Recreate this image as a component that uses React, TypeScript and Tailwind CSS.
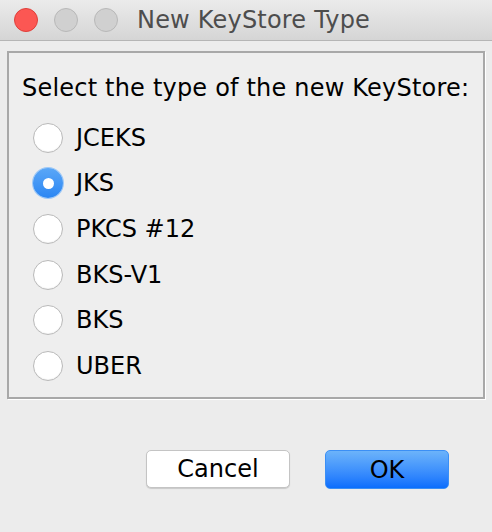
import React from 'react';

const types = ['JCEKS', 'JKS', 'PKCS #12', 'BKS-V1', 'BKS', 'UBER'];

const Radio: React.FC<{ checked?: boolean }> = ({ checked = false }) =>
    checked ? (
        <div className="w-[30px] h-[30px] rounded-full bg-gradient-to-b from-[#5aa7f7] to-[#2a86f3] shadow-[0_0_0_1px_#9cc8f8] flex items-center justify-center">
            <div className="w-[11px] h-[11px] rounded-full bg-white"></div>
        </div>
    ) : (
        <div className="w-[30px] h-[30px] rounded-full bg-white border border-[#b9b9b9] shadow-[inset_0_-1px_1px_rgba(0,0,0,0.05)]"></div>
    );

export default function App() {
    return (
        <div className="w-[492px] h-[532px] bg-[#ececec] flex flex-col font-['DejaVu_Sans',sans-serif] text-black">
            {/* Title bar */}
            <div className="h-[41px] shrink-0 flex items-center bg-gradient-to-b from-[#ebebeb] to-[#d5d5d5] border-b border-[#b5b5b5]">
                <div className="flex items-center gap-4 pl-[14px]">
                    <div className="w-[24px] h-[24px] rounded-full bg-[#fc5753] border border-[#df3f3a]"></div>
                    <div className="w-[24px] h-[24px] rounded-full bg-[#d0d0d0] border border-[#b8b8b8]"></div>
                    <div className="w-[24px] h-[24px] rounded-full bg-[#d0d0d0] border border-[#b8b8b8]"></div>
                </div>
                <div className="ml-[19px] text-[24px] text-[#4d4d4d] leading-none tracking-[0.2px]">New KeyStore Type</div>
            </div>

            {/* Options panel */}
            <div className="mt-[10px] mx-[7px] h-[348px] border-2 border-[#a8a8a8] bg-[#eeeeee] shadow-[1px_1px_0_#ffffff] pl-[13px] pt-[21px]">
                <div className="text-[24px] leading-[28px] tracking-[0.2px]">Select the type of the new KeyStore:</div>
                <div className="flex flex-col mt-[13px] pl-[11px]">
                    {types.map((t, i) => (
                        <div key={t} className="h-[45.6px] flex items-center gap-[13px]">
                            <Radio checked={i === 1} />
                            <span className="text-[24px]">{t}</span>
                        </div>
                    ))}
                </div>
            </div>

            {/* Buttons */}
            <div className="flex pl-[146px] pt-[51px] gap-[35px]">
                <button className="w-[144px] h-[38px] rounded-[5px] bg-white border border-[#c4c4c4] shadow-[0_1px_1px_rgba(0,0,0,0.15)] text-[24px] leading-none">
                    Cancel
                </button>
                <button className="w-[124px] h-[39px] rounded-[5px] bg-gradient-to-b from-[#6cb3fa] to-[#0a6efd] border border-[#3b8ff5] text-[24px] leading-none">
                    OK
                </button>
            </div>
        </div>
    );
}
